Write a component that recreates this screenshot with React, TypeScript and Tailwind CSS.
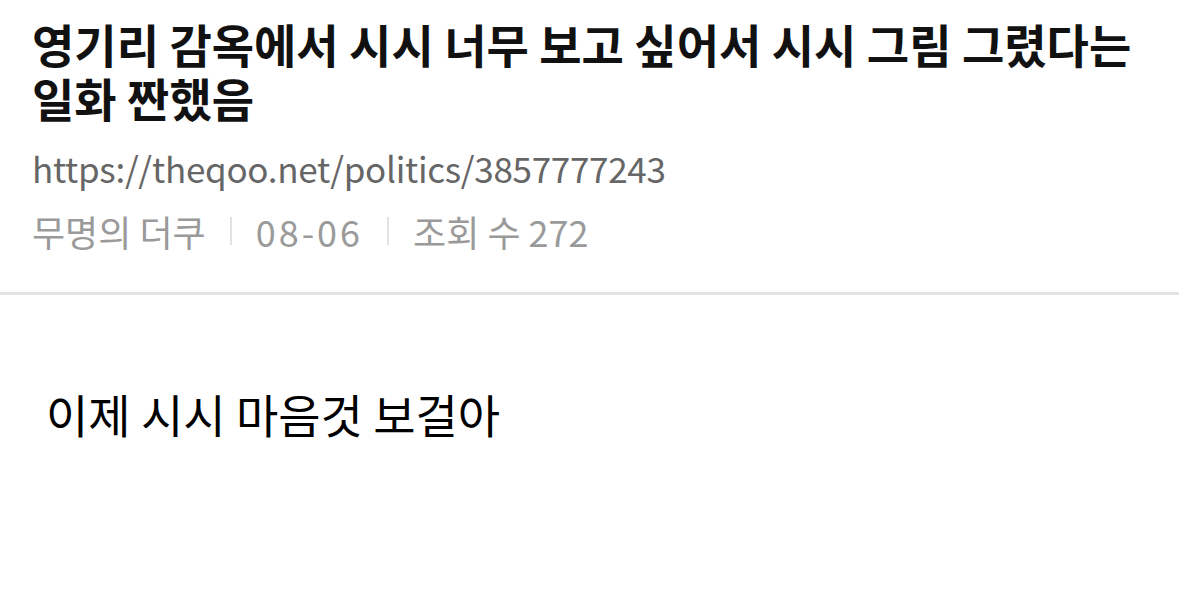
export default function App() {
  return (
    <div className="min-h-[590px] w-[1179px] bg-white font-['Noto_Sans_CJK_KR',sans-serif]">
      <header className="px-8 pt-[16px] pb-[41px]">
        <h1 className="break-keep text-[46px] font-bold leading-[54px] text-[#111]">
          영기리 감옥에서 시시 너무 보고 싶어서 시시 그림 그렸다는 일화 짠했음
        </h1>
        <p className="mt-[24px] text-[35px] leading-[40px] tracking-[-0.3px] text-[#666]">
          https://theqoo.net/politics/3857777243
        </p>
        <div className="mt-[23px] flex items-center text-[36px] leading-[40px] text-[#9a9a9a]">
          <span>무명의 더쿠</span>
          <span className="mx-[24px] h-[28px] w-[2px] bg-[#e2e2e2]" />
          <span className="tracking-[3px]">08-06</span>
          <span className="mx-[24px] h-[28px] w-[2px] bg-[#e2e2e2]" />
          <span>조회 수 272</span>
        </div>
      </header>
      <div className="h-[3px] bg-[#e3e3e3]" />
      <main className="px-[46px] pt-[91px]">
        <p className="text-[46px] leading-[54px] text-black">이제 시시 마음것 보걸아</p>
      </main>
    </div>
  );
}
